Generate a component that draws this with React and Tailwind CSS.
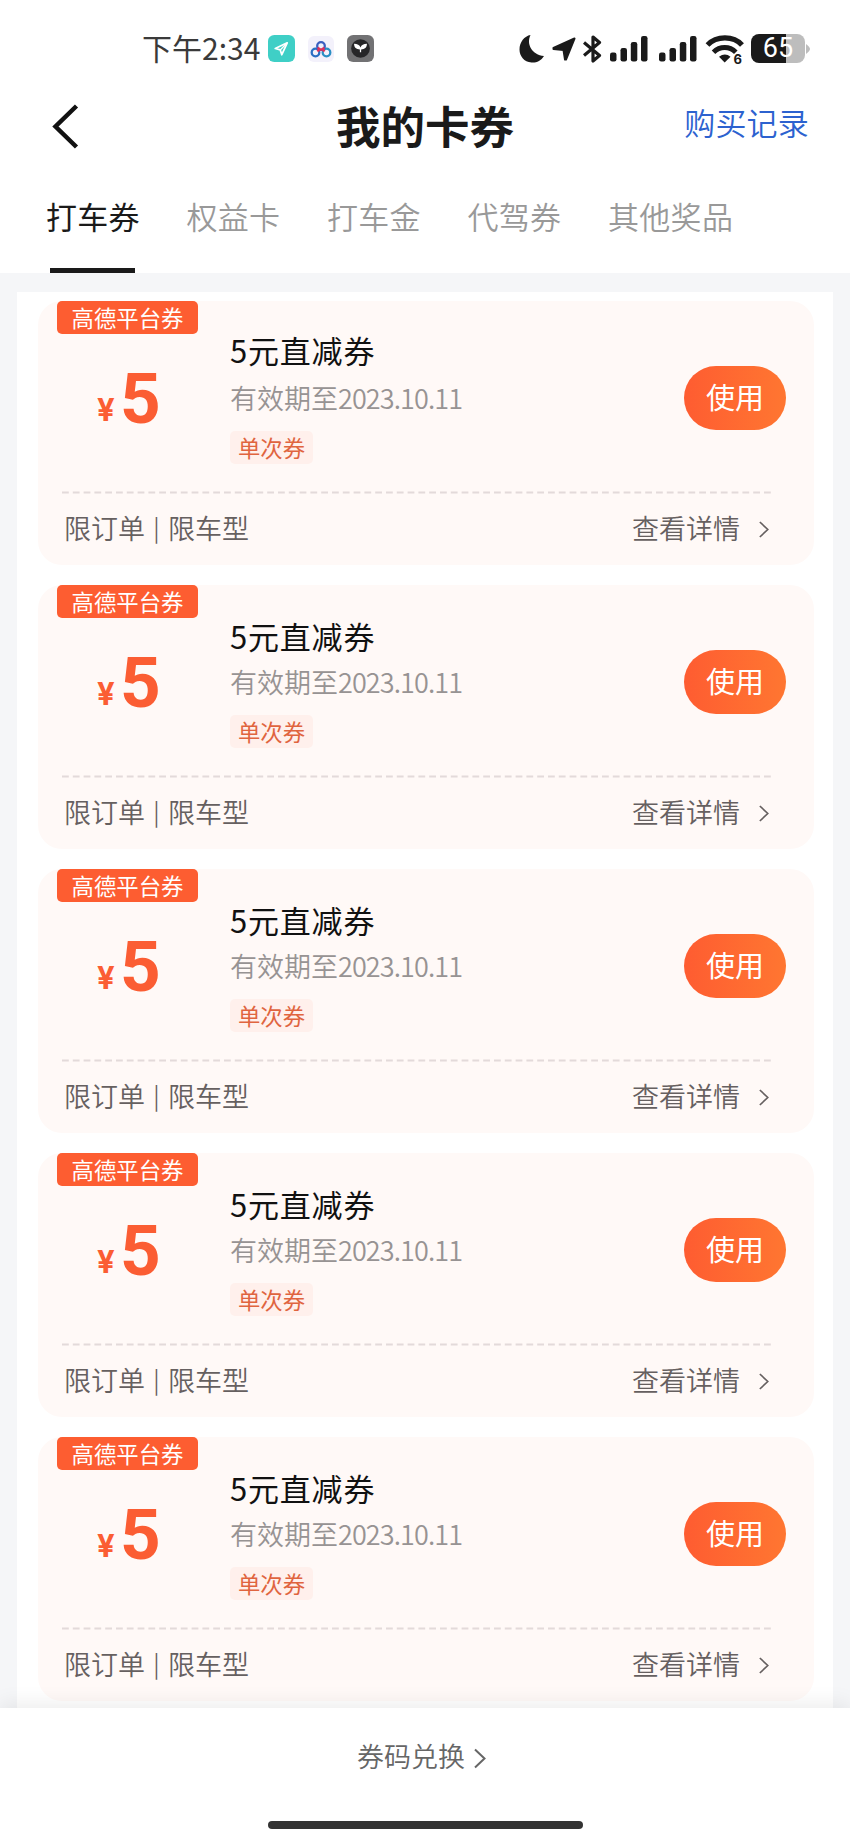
import React from "react";

const tabs = ["打车券", "权益卡", "打车金", "代驾券", "其他奖品"];

// 卡券列表
const coupons = [1, 2, 3, 4, 5].map((id) => ({
  id,
  source: "高德平台券",
  amount: 5,
  title: "5元直减券",
  expire: "2023.10.11",
  tag: "单次券",
  limits: ["限订单", "限车型"],
}));

function Chevron({ className }) {
  return (
    <svg viewBox="0 0 12 20" className={className} fill="none" stroke="currentColor" strokeWidth="2">
      <path d="M1 1l9.5 9L1 19" />
    </svg>
  );
}

function Signal() {
  return (
    <svg viewBox="0 0 38 26" className="w-[38px] h-[26px]" fill="#1a1a1a">
      <rect x="0" y="16.5" width="6.5" height="9" rx="2.2" />
      <rect x="10.5" y="12" width="6.5" height="13.5" rx="2.2" />
      <rect x="20.8" y="6" width="6.5" height="19.5" rx="2.2" />
      <rect x="31" y="0" width="6.5" height="25.5" rx="2.2" />
    </svg>
  );
}

function StatusBar() {
  return (
    <div className="flex items-center h-[97px] pl-[142px] shrink-0">
      <span className="text-[30px] leading-[40px] pb-[3px] text-[#3a3a3a] w-[122px] whitespace-nowrap">下午2:34</span>
      <svg viewBox="0 0 26 26" className="w-[27px] h-[27px] ml-[4px]">
        <rect width="26" height="26" rx="6" fill="#3fcfc6" />
        <path d="M18.5 7.5L7 13l4.8 1.4L13.3 19z" fill="none" stroke="#fff" strokeWidth="1.7" strokeLinejoin="round" />
        <path d="M11.8 14.4L18 8" stroke="#fff" strokeWidth="1.2" />
      </svg>
      <svg viewBox="0 0 26 26" className="w-[26px] h-[26px] ml-[13px]" fill="none" strokeWidth="2.3">
        <rect width="26" height="26" rx="6" fill="#f3f1fb" />
        <circle cx="7.5" cy="16.5" r="3.8" stroke="#2b6fc4" />
        <circle cx="18.5" cy="16.5" r="3.8" stroke="#2b8fc4" />
        <circle cx="13" cy="10" r="3.8" stroke="#3a5fc0" />
        <path d="M9.8 11.5q3.2 4.5 6.4 0" stroke="#e0315c" />
        <path d="M9.5 13.5l1.5 2M16.5 13.5l-1.5 2" stroke="#e0315c" />
      </svg>
      <svg viewBox="0 0 26 26" className="w-[27px] h-[27px] ml-[13px]">
        <rect width="26" height="26" rx="6" fill="#727274" />
        <circle cx="13" cy="13" r="9" fill="#262628" />
        <path d="M12.4 16.5v-2.5C9 14 6.8 12 6.8 8.5c3.2 0 5.4 1.3 6.2 3.5.8-2.2 3-3.5 6.2-3.5 0 3.5-2.2 5.5-5.6 5.5v2.5z" fill="#fff" />
      </svg>

      <svg viewBox="0 0 26 28" className="w-[26px] h-[28px] ml-[145px]" fill="#1a1a1a">
        <path d="M11.5 0C7 9 13 20 25 21 22 26 17 28 12.5 27.5 5 27 .5 21 .5 14.5.5 7 5.5 1 11.5 0z" />
      </svg>
      <svg viewBox="0 0 24 24" className="w-[24px] h-[24px] ml-[7px]" fill="#1a1a1a" stroke="#1a1a1a" strokeWidth="2" strokeLinejoin="round">
        <path d="M22.5 1.5L14 22.5h-1L11.5 13 1.5 12v-1z" />
      </svg>
      <svg viewBox="0 0 19 28" className="w-[19px] h-[28px] ml-[7px]" fill="none" stroke="#1a1a1a" strokeWidth="3.2" strokeLinejoin="round">
        <path d="M1 7.5L16.5 20.5 10 26V2l6.5 5.500L1 20.500" />
      </svg>
      <div className="ml-[8px] mr-[11px]"><Signal /></div>
      <Signal />
      <svg viewBox="0 0 38 32" className="w-[38px] h-[32px] ml-[9px] mt-[3px] overflow-visible" fill="none" stroke="#1a1a1a">
        <path d="M1.500 11c9-9.500 26-9.500 34.500 0" strokeWidth="5.2" />
        <path d="M7.500 18.200c6.300-6.300 16-6.300 22.300 0" strokeWidth="5" />
        <path d="M13 22.800q6-4.500 11.500 0L18.700 28.500z" fill="#1a1a1a" stroke="none" />
        <text x="27.500" y="29.500" fontSize="13" fontWeight="700" fontFamily="Inter, sans-serif" fill="#1a1a1a" stroke="#fff" strokeWidth="2" paintOrder="stroke">6</text>
      </svg>
      <div className="ml-[7px] w-[54px] h-[29px] shrink-0 rounded-[8px] bg-linear-to-r from-[#1a1a1a] from-65% to-[#bdbdbd] to-65% flex items-center justify-center">
        <span className="text-white text-[27px] leading-[29px] font-['Roboto',sans-serif]">65</span>
      </div>
      <svg viewBox="0 0 4 10" className="w-[4px] h-[10px] ml-px" fill="#bdbdbd">
        <path d="M0 0q4 3 4 5t-4 5z" />
      </svg>
    </div>
  );
}

function CouponCard({ coupon, first }) {
  return (
    <div className="h-[264px] shrink-0 rounded-[24px] bg-[#fff9f7] pl-[19px] pr-[29px]">
      <div className="flex h-[190px]">
        <div className="w-[173px]">
          <div className="w-[141px] h-[33px] rounded-[5px] bg-[#fd5d31] text-white text-[22.4px] leading-[32px] text-center">
            {coupon.source}
          </div>
          <div className="flex items-baseline pl-[40px] mt-[25px] text-[#fb5d33] leading-[80px] font-bold">
            <span className="text-[31px] w-[23px] -translate-y-[2px] font-['Inter',sans-serif]">¥</span>
            <span className="text-[71px] font-['Roboto',sans-serif]">{coupon.amount}</span>
          </div>
        </div>
        <div className="flex-1">
          <div className={first ? "mt-[28px] mb-[9px]" : "mt-[30px] mb-[7px]"}>
            <div className="text-[31px] leading-[42px] tracking-[0.8px] text-[#111]">{coupon.title}</div>
          </div>
          <div className="text-[27px] leading-[36px] text-[#979393] font-[350] whitespace-nowrap">
            有效期至<span className="tracking-[-0.9px]">{coupon.expire}</span>
          </div>
          <div className="mt-[15px] w-[83px] h-[33px] rounded-[5px] bg-[#fff0ec] text-[#e0643f] text-[22.4px] leading-[32px] text-center">
            {coupon.tag}
          </div>
        </div>
        <button className="mt-[65px] w-[102px] h-[64px] rounded-full bg-linear-to-r from-[#fe5c31] to-[#ff7631] text-white text-[29px] leading-[56px] pb-[5px] mr-[-1px]">
          使用
        </button>
      </div>
      <svg className="block w-[711px] h-[3px] ml-[5px]" viewBox="0 0 711 3">
        <path d="M0 1.500h711" stroke="#e3dada" strokeWidth="2" strokeDasharray="6.800 4" />
      </svg>
      <div className="flex items-center justify-between h-[69px] pl-[7px] pr-[16px] text-[27px] text-[#666060] font-[350]">
        <span className="flex items-center">
          {coupon.limits[0]}
          <span className="w-[23px] text-center text-[24px] leading-[30px] pb-[3px]">|</span>
          {coupon.limits[1]}
        </span>
        <span className="flex items-center">
          查看详情
          <Chevron className="w-[10px] h-[17px] ml-[19px] mt-[1px]" />
        </span>
      </div>
    </div>
  );
}

export default function App() {
  return (
    <div className="flex flex-col w-[850px] h-[1842px] overflow-hidden bg-white font-['Noto_Sans_CJK_SC',sans-serif]">
      <StatusBar />

      {/* 标题栏 */}
      <div className="grid grid-cols-3 items-center h-[55px] px-[41px] shrink-0">
        <svg viewBox="0 0 27 45" className="w-[27px] h-[45px] ml-[11px]" fill="none" stroke="#111" strokeWidth="4.500">
          <path d="M24.500 2L3.500 22.500 24.500 43" />
        </svg>
        <h1 className="text-[44.5px] leading-[54px] pb-[3px] font-bold text-[#1a1a1a] text-center whitespace-nowrap">我的卡券</h1>
        <a className="text-[31px] leading-[50px] pb-[8px] tracking-[0.2px] font-[350] text-[#2c62cf] text-right whitespace-nowrap">购买记录</a>
      </div>

      {/* 分类 */}
      <div className="flex gap-[46.6px] h-[121px] pl-[46px] pt-[41px] shrink-0 text-[31px] leading-[46px] tracking-[0.3px] font-[350] text-[#999]">
        {tabs.map((tab, i) => (
          <div key={tab} className={i === 0 ? "flex flex-col justify-between font-normal text-[#1a1a1a]" : ""}>
            {tab}
            {i === 0 && <div className="w-[85px] h-[5px] ml-[4px] bg-[#1a1a1a]" />}
          </div>
        ))}
      </div>

      <div className="flex-1 min-h-0 overflow-hidden bg-[#f5f6f8] pt-[19px] px-[17px]">
        <div className="flex flex-col gap-[20px] bg-white pt-[9px] pb-[20px] pl-[21px] pr-[19px]">
          {coupons.map((coupon, i) => (
            <CouponCard key={coupon.id} coupon={coupon} first={i === 0} />
          ))}
        </div>
      </div>

      {/* 底部兑换 */}
      <div className="relative flex flex-col items-center h-[134px] shrink-0 bg-white shadow-[0_-4px_20px_rgba(0,0,0,0.08)]">
        <div className="flex items-center h-[97px] mr-[7px] text-[27px] text-[#666] font-[350]">
          券码兑换
          <Chevron className="w-[12px] h-[21px] ml-[9px] mt-[3px]" />
        </div>
        <div className="mt-[16px] w-[315px] h-[8px] rounded-full bg-[#333]" />
      </div>
    </div>
  );
}
